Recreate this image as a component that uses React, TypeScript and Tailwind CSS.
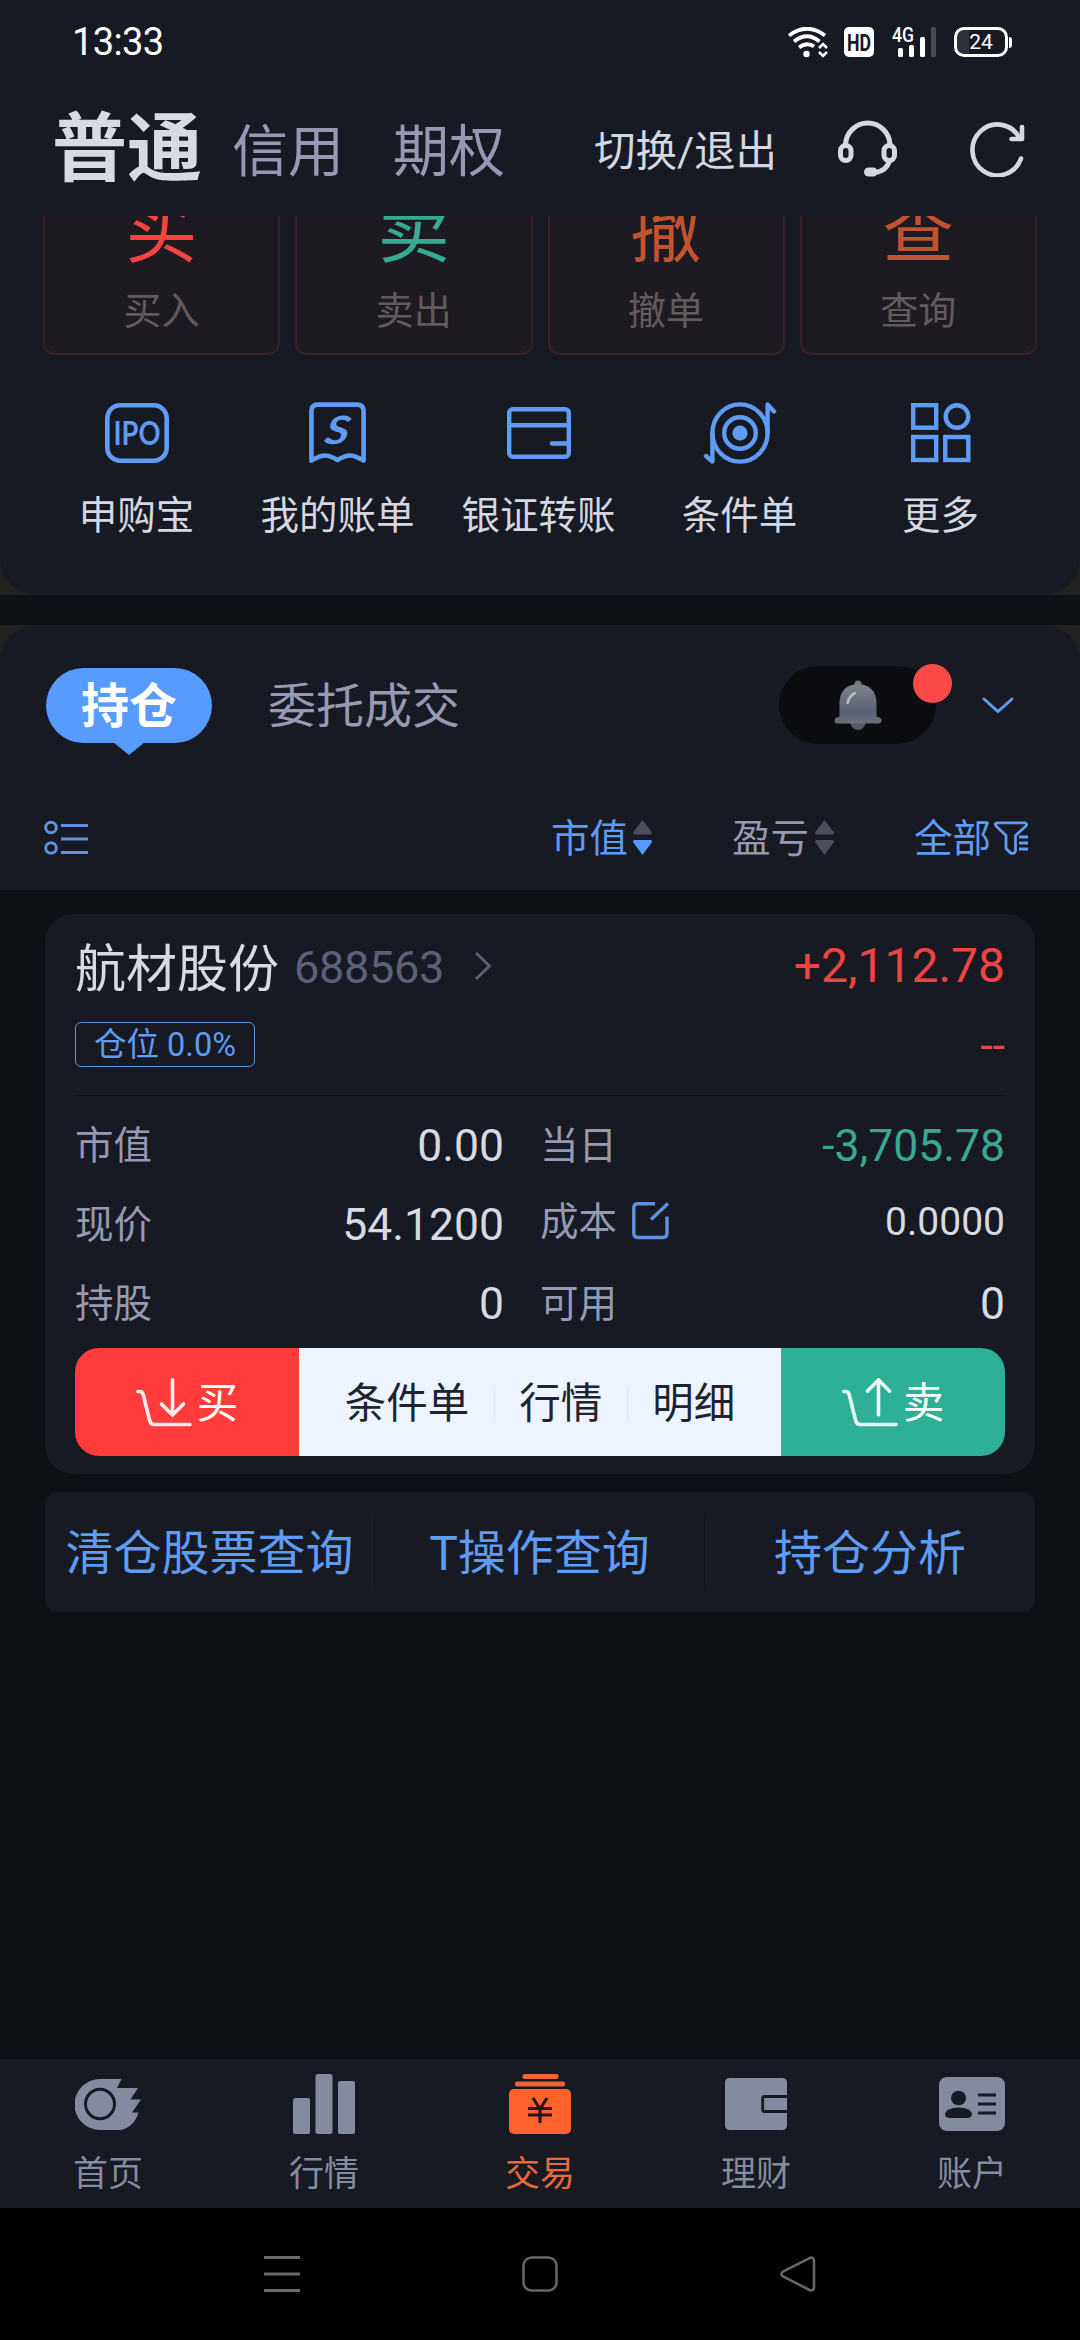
import type { ReactNode } from "react";
import { clsx } from "clsx";

const orders = [
  { glyph: "买", label: "买入", color: "text-[#fb4340]" },
  { glyph: "卖", label: "卖出", color: "text-[#35ab91]" },
  { glyph: "撤", label: "撤单", color: "text-[#bf542f]" },
  { glyph: "查", label: "查询", color: "text-[#bf542f]" },
];

const shortcuts = [
  { label: "申购宝", icon: <IpoIcon /> },
  { label: "我的账单", icon: <BillIcon /> },
  { label: "银证转账", icon: <CardIcon /> },
  { label: "条件单", icon: <TargetIcon /> },
  { label: "更多", icon: <MoreIcon /> },
];

const tabs = [
  { label: "首页", icon: <HomeIcon /> },
  { label: "行情", icon: <BarsIcon /> },
  { label: "交易", icon: <TradeIcon />, active: true },
  { label: "理财", icon: <WalletIcon /> },
  { label: "账户", icon: <AccountIcon /> },
];

function IpoIcon() {
  return (
    <svg width="64" height="60" viewBox="0 0 64 60" fill="none">
      <rect x="2.3" y="2.3" width="59.4" height="55.4" rx="13" stroke="#5f9cf3" strokeWidth="4.6" />
      <text
        x="32"
        y="42"
        textAnchor="middle"
        textLength="47"
        lengthAdjust="spacingAndGlyphs"
        fontFamily="Lato"
        fontWeight="700"
        fontSize="33"
        fill="#5f9cf3"
      >
        IPO
      </text>
    </svg>
  );
}

function BillIcon() {
  return (
    <svg width="57" height="62" viewBox="0 0 57 62" fill="none">
      <path
        d="M2.4 58.5V9Q2.4 2.6 9 2.6H48Q54.6 2.6 54.6 9V58.5Q46 53.5 41 53.5Q36 53.5 28.5 58Q21 53.5 16 53.5Q11 53.5 2.4 58.5Z"
        stroke="#5f9cf3"
        strokeWidth="4.6"
        strokeLinejoin="round"
      />
      <text
        x="21"
        y="42"
        textAnchor="middle"
        fontFamily="Lato"
        fontStyle="italic"
        fontWeight="700"
        fontSize="39"
        fill="#5f9cf3"
        transform="scale(1.2 1) skewX(-8) translate(7 0)"
      >
        S
      </text>
    </svg>
  );
}

function CardIcon() {
  return (
    <svg width="64" height="52" viewBox="0 0 64 52" fill="none" stroke="#5f9cf3" strokeWidth="4.4">
      <rect x="2.2" y="2.2" width="59.6" height="47.6" rx="3.5" />
      <path d="M2 18.3H62" />
      <path d="M45 36.5H62" strokeLinecap="round" />
    </svg>
  );
}

function TargetIcon() {
  return (
    <svg width="74" height="62" viewBox="0 0 74 62" fill="none" stroke="#5f9cf3" strokeWidth="4.4">
      <ellipse cx="37" cy="31" rx="27.6" ry="28.6" />
      <circle cx="37" cy="31" r="15.8" />
      <circle cx="37" cy="31" r="7.6" fill="#5f9cf3" stroke="none" />
      <path d="M9.4 31V59.5L3 54M64.6 31V2.5L71 9.5" strokeLinecap="round" strokeLinejoin="round" />
    </svg>
  );
}

function MoreIcon() {
  return (
    <svg width="60" height="60" viewBox="0 0 60 60" fill="none" stroke="#5f9cf3" strokeWidth="4.4">
      <rect x="2.2" y="2.2" width="23" height="22.5" />
      <circle cx="46" cy="13.5" r="11.3" />
      <rect x="2.2" y="34" width="23" height="23" />
      <rect x="34.3" y="34" width="23" height="23" />
    </svg>
  );
}

function HeadsetIcon() {
  return (
    <svg width="60" height="59" viewBox="0 0 60 59" fill="none" stroke="#d5d7e1" strokeWidth="5">
      <path d="M7.5 27V25A22.3 22.5 0 0 1 52 25V27" />
      <rect x="2.5" y="26.5" width="10.5" height="15" rx="5.2" />
      <rect x="46" y="26.5" width="10.5" height="15" rx="5.2" />
      <path d="M51.5 42Q48.5 51.5 38 53.5" />
      <rect x="26" y="48.5" width="13.5" height="9" rx="4.5" fill="#d5d7e1" stroke="none" />
    </svg>
  );
}

function RefreshIcon() {
  return (
    <svg
      width="55"
      height="57"
      viewBox="0 0 55 57"
      fill="none"
      stroke="#d5d7e1"
      strokeWidth="4.6"
      strokeLinecap="round"
      strokeLinejoin="round"
    >
      <path d="M51 38.5A25 25.500 0 1 1 49.500 18" />
      <path d="M52 7V19H41.5" />
    </svg>
  );
}

function BellIcon() {
  return (
    <svg width="48" height="51" viewBox="0 0 48 51">
      <defs>
        <linearGradient id="bell" x1="0" y1="0" x2="0" y2="1">
          <stop offset="0" stopColor="#7e828b" />
          <stop offset="0.7" stopColor="#5c6172" />
          <stop offset="1" stopColor="#6b717b" />
        </linearGradient>
      </defs>
      <circle cx="24" cy="4" r="3.5" fill="#72757a" />
      <path d="M16 42H32Q30 50 24 50Q18 50 16 42Z" fill="#525a5f" />
      <path
        d="M5.5 37V22Q6.5 5 24 4Q41.5 5 42.5 22V37H44Q47.5 37.5 47.5 40.5Q47.5 43.5 44 43.5H4Q.5 43.5 .5 40.5Q.5 37.5 4 37Z"
        fill="url(#bell)"
      />
      <path d="M13.5 23Q15 16 21 13" stroke="#b9bcc4" strokeWidth="2.6" strokeLinecap="round" fill="none" />
    </svg>
  );
}

function FilterIcon() {
  return (
    <svg width="36" height="35" viewBox="0 0 36 35" fill="none" stroke="#5f9cf3" strokeWidth="2.8" strokeLinejoin="round">
      <path d="M3 1.8H31Q34 2.5 31.500 5.5L21.5 14.5V30Q20 34 16 31.5L12 27.5V14.5L2.5 5.5Q0 2.5 3 1.8Z" />
      <path d="M25 16H34M25 22H34M25 28H34" />
    </svg>
  );
}

function ListIcon() {
  return (
    <svg width="45" height="36" viewBox="0 0 45 36" fill="none" stroke="#5f92dc" strokeWidth="3">
      <circle cx="7" cy="7.5" r="5.3" />
      <circle cx="7" cy="28" r="5.3" />
      <path d="M17 5.5H44M17 19H44M17 32.500H44" />
    </svg>
  );
}

function SortIcon({ active = false }: { active?: boolean }) {
  return (
    <svg width="19" height="36" viewBox="0 0 19 36">
      <path d="M9.5 0L19 12.5Q19 14.5 17.5 14.5H1.5Q0 14.5 0 12.5Z" fill="#4d4d5c" />
      <path d="M9.5 35L0 22Q0 20 1.5 20H17.5Q19 20 19 22Z" fill={active ? "#579bff" : "#4d4d5c"} />
    </svg>
  );
}

function CartIcon({ up = false }: { up?: boolean }) {
  return (
    <svg width="56" height="49" viewBox="0 0 56 49" fill="none" stroke="#fff" strokeOpacity="0.9" strokeWidth="3.6" strokeLinecap="round">
      <path d="M1.8 13.5H3.5Q6.5 13.5 7.2 16.5L13.5 42Q14.5 46.5 18.5 46.5H54" />
      {up ? <path d="M36.5 37V2M25.5 13L36.5 2L47.5 13" /> : <path d="M36.5 1.8V37M25.5 26L36.5 37L47.5 26" />}
    </svg>
  );
}

function HomeIcon() {
  return (
    <svg width="66" height="51" viewBox="0 0 66 51">
      <path
        d="M25 0H46.5L42 9H63L55.5 20.5H66L57 33.5H63.5Q59 48 46 51H25A25.5 25.5 0 0 1 25 0Z"
        fill="#858b9e"
      />
      <ellipse cx="25" cy="25" rx="14.5" ry="14.7" fill="none" stroke="#171a22" strokeWidth="3" />
    </svg>
  );
}

function BarsIcon() {
  return (
    <svg width="62" height="60" viewBox="0 0 62 60" fill="#858b9e">
      <rect x="0" y="24" width="17" height="36" rx="2.5" />
      <rect x="22.5" y="0" width="17" height="60" rx="2.5" />
      <rect x="45" y="7" width="17" height="53" rx="2.5" />
    </svg>
  );
}

function TradeIcon() {
  return (
    <svg width="62" height="60" viewBox="0 0 62 60">
      <g fill="#ee6434">
        <rect x="13.5" y="0" width="36" height="5" rx="2" />
        <rect x="6" y="7.5" width="50" height="5" rx="2" />
      </g>
      <rect y="15" width="62" height="45" rx="5" fill="#ff622b" />
      <path d="M24 24L31 35L38 24M31 35V49M19 34.5H43M19 41H43" stroke="#2b1517" strokeWidth="3.2" fill="none" />
    </svg>
  );
}

function WalletIcon() {
  return (
    <svg width="62" height="52" viewBox="0 0 62 52">
      <rect width="62" height="52" rx="4.5" fill="#858b9e" />
      <path d="M62 18.5H39.5Q37.7 18.5 37.7 20.5V31.5Q37.7 33.5 39.5 33.500H62" stroke="#171a22" strokeWidth="2.8" fill="none" />
    </svg>
  );
}

function AccountIcon() {
  return (
    <svg width="66" height="54" viewBox="0 0 66 54">
      <rect width="66" height="54" rx="8" fill="#858b9e" />
      <g fill="#171a22">
        <ellipse cx="19.5" cy="21" rx="7.5" ry="7.3" />
        <path d="M6 36.5Q8 31 19.5 30.5Q31 31 33 36.5Q33 40.5 29 41H10Q6 40.5 6 36.5Z" />
      </g>
      <path d="M39 18H57M39 27H57M39 36H57" stroke="#171a22" strokeWidth="3" />
    </svg>
  );
}

function StatusBar() {
  return (
    <div className="flex h-[84px] items-center pl-[72px] pr-[68px] text-white">
      <span className="text-[38px] tracking-[-0.6px]">13:33</span>
      <div className="ml-auto flex items-center">
        <svg width="41" height="31" viewBox="0 0 41 31" fill="none" stroke="#fff" strokeWidth="3.800">
          <path d="M1 8.5Q19 -5 37 8.5M6 14.5Q19 4 31.5 14.5M11 20.5Q19 14.5 26 19.500" />
          <circle cx="18.5" cy="27" r="3.2" fill="#fff" stroke="none" />
          <path d="M31 21L35 17L39 21M31 25L35 29L39 25" strokeWidth="2.6" />
        </svg>
        <svg width="30" height="30" viewBox="0 0 30 30" className="ml-[15px]">
          <rect width="30" height="30" rx="5" fill="#fff" />
          <text
            x="3"
            y="23.5"
            fontFamily="Roboto"
            fontWeight="700"
            fontSize="23"
            textLength="24"
            lengthAdjust="spacingAndGlyphs"
            fill="#171a22"
          >
            HD
          </text>
        </svg>
        <svg width="45" height="30" viewBox="0 0 45 30" className="ml-[18px] overflow-visible" fill="#fff">
          <text x="0" y="15" fontFamily="Roboto" fontWeight="500" fontSize="20" textLength="22" lengthAdjust="spacingAndGlyphs">
            4G
          </text>
          <rect x="6" y="21" width="5" height="9" rx="1.5" />
          <rect x="17" y="18" width="5" height="12" rx="1.5" />
          <rect x="28" y="10" width="5" height="20" rx="1.5" />
          <rect x="39" y="0" width="5" height="30" rx="1.5" fill="#484a52" />
        </svg>
        <div className="ml-[17px] flex h-[30px] w-[54px] items-center justify-center rounded-[10px] border-[3px] border-white bg-linear-to-r from-[#30323b] from-25% to-transparent to-25% text-[21px] leading-none">
          24
        </div>
        <div className="ml-px h-[11px] w-[3px] rounded-r-sm bg-white" />
      </div>
    </div>
  );
}

function Header() {
  return (
    <header className="flex h-[132px] items-center pl-[52px] pr-[55px] leading-none">
      <span className="pb-px text-[75px] font-bold text-[#d7d9e3]">普通</span>
      <span className="ml-[30px] pt-1 text-[56px] text-[#9799b2]">信用</span>
      <span className="ml-[49px] pt-1 text-[56px] text-[#9799b2]">期权</span>
      <div className="ml-auto flex items-center">
        <span className="pt-1 text-[41.500px] text-[#d5d7e1]">切换/退出</span>
        <span className="mb-1 ml-[61px]">
          <HeadsetIcon />
        </span>
        <span className="mb-1 ml-[72px]">
          <RefreshIcon />
        </span>
      </div>
    </header>
  );
}

function QuickPanel() {
  return (
    <div className="bg-[#222221]">
      <section className="h-[379px] rounded-b-[36px] bg-[#171a22]">
        <div className="flex h-[139px] items-end gap-[15px] overflow-hidden px-[43px]">
          {orders.map((item) => (
            <div
              key={item.label}
              className="flex h-[200px] flex-1 flex-col items-center justify-end rounded-xl border-2 border-[#3c2027] bg-[#1e1a22] pb-[23px] leading-none"
            >
              <span className={clsx("text-[72px]", item.color)}>{item.glyph}</span>
              <span className="mt-[24px] text-[38px] text-[#625a5d]">{item.label}</span>
            </div>
          ))}
        </div>
        <div className="mt-[47px] flex pl-[36px] pr-[39px]">
          {shortcuts.map((item) => (
            <div key={item.label} className="flex flex-1 flex-col items-center">
              <div className="flex h-[62px] items-center">{item.icon}</div>
              <span className="mt-[33px] whitespace-nowrap text-[38.500px] leading-[38px] text-[#d5d7e1]">{item.label}</span>
            </div>
          ))}
        </div>
      </section>
    </div>
  );
}

function PositionTabs() {
  return (
    <div className="mt-[30px] bg-[#222221]">
      <section className="h-[265px] rounded-t-[36px] bg-[#171a22] pt-[41px]">
        <div className="flex h-[78px] items-center pl-[46px] pr-[66px]">
          <div className="relative flex h-[75px] w-[166px] items-center justify-center rounded-full bg-[#579bff] pt-[3px] text-[48px] font-bold leading-none text-white">
            持仓
            <svg width="32" height="13" viewBox="0 0 32 13" className="absolute left-[67px] top-[74px]">
              <path d="M0 0H32L16 13Z" fill="#579bff" />
            </svg>
          </div>
          <span className="ml-[56px] pt-1 text-[48px] leading-none text-[#9799b2]">委托成交</span>
          <div className="relative ml-auto flex h-[78px] w-[157px] items-center justify-center rounded-full bg-[#0b0d11]">
            <BellIcon />
            <span className="absolute -right-[16px] -top-[2px] h-[39px] w-[39px] rounded-full bg-[#fd4a48]" />
          </div>
          <svg width="32" height="17" viewBox="0 0 32 17" className="ml-[46px]" fill="none">
            <path d="M2 2L16 14.5L30 2" stroke="#5f9cf3" strokeWidth="3" strokeLinecap="round" />
          </svg>
        </div>
        <div className="mt-[69px] flex h-[50px] items-center pl-[44px] pr-[50px] text-[38.500px] leading-none text-[#5f9cf3]">
          <ListIcon />
          <div className="ml-auto flex items-center gap-[5px]">
            <span className="pt-0.5">市值</span>
            <SortIcon active />
          </div>
          <div className="ml-[80px] flex items-center gap-[6px] text-[#9799b2]">
            <span className="pt-0.5">盈亏</span>
            <SortIcon />
          </div>
          <div className="ml-[80px] flex items-center gap-[3px]">
            <span className="pt-0.5">全部</span>
            <FilterIcon />
          </div>
        </div>
      </section>
    </div>
  );
}

function Cell({ label, value, down = false }: { label: ReactNode; value: string; down?: boolean }) {
  return (
    <div className="flex h-[79px] items-center justify-between">
      <span className="text-[38.500px] text-[#9799b2]">{label}</span>
      <span className={clsx("text-[44.500px]", down ? "text-[#3aa78f]" : "text-[#d7d9e3]")}>{value}</span>
    </div>
  );
}

function Holding() {
  return (
    <section className="mx-[45px] mt-6 h-[560px] rounded-[28px] bg-[#171a22] px-[30px] leading-none">
      <div className="flex h-[108px] items-center">
        <span className="pt-0.5 text-[51px] text-[#d7d9e3]">航材股份</span>
        <span className="ml-[15px] pb-0.5 text-[45px] tracking-[-0.3px] text-[#5d6079]">688563</span>
        <svg width="18" height="30" viewBox="0 0 18 30" className="mb-1 ml-[30px]" fill="none">
          <path d="M2 2L15.5 15L2 28" stroke="#5d6079" strokeWidth="2.8" />
        </svg>
        <span className="ml-auto pb-1 text-[48px] text-[#ee4444]">+2,112.78</span>
      </div>
      <div className="flex h-[45px] items-center justify-between">
        <span className="flex h-[45px] w-[180px] items-center justify-center rounded-md border border-[#5f92dc] pt-px text-[32.500px] text-[#5f9cf3]">
          仓位 0.0%
        </span>
        <span className="pt-0.5 text-[45px] text-[#e04a4b]">--</span>
      </div>
      <div className="mt-7 h-px bg-[#0d1014]" />
      <div className="mt-[11px] grid grid-cols-[429px_465px] gap-x-[36px]">
        <div>
          <Cell label="市值" value="0.00" />
          <Cell label="现价" value="54.1200" />
          <Cell label="持股" value="0" />
        </div>
        <div>
          <Cell label="当日" value="-3,705.78" down />
          <div className="flex h-[79px] items-center justify-between pb-[7px]">
            <span className="flex items-center text-[38.500px] text-[#9799b2]">
              成本
              <svg width="38" height="38" viewBox="0 0 38 38" className="mb-[3px] ml-[15px]" fill="none" stroke="#5f92dc" strokeWidth="3.4">
                <path d="M23 1.8H6Q1.8 1.8 1.8 6V31Q1.8 35.5 6 35.5H31Q35 35.5 35 31V14.5M19 17.5L36 1.5" />
              </svg>
            </span>
            <span className="text-[39px] text-[#d7d9e3]">0.0000</span>
          </div>
          <Cell label="可用" value="0" />
        </div>
      </div>
      <div className="mt-[4px] flex h-[108px] overflow-hidden rounded-[24px] text-[41.500px]">
        <div className="flex w-[224px] items-center justify-center gap-[5px] bg-[#ff3c3b] text-white">
          <CartIcon />
          <span className="pt-[3px]">买</span>
        </div>
        <div className="flex flex-1 items-center justify-center bg-[#edf4ff] pt-[3px] text-[#20232f]">
          <span>条件单</span>
          <span className="mx-[24.500px] h-9 w-px bg-[#dde3ec]" />
          <span>行情</span>
          <span className="mx-[24.500px] h-9 w-px bg-[#dde3ec]" />
          <span>明细</span>
        </div>
        <div className="flex w-[224px] items-center justify-center gap-[5px] bg-[#2eb096] text-white">
          <CartIcon up />
          <span className="pt-[3px]">卖</span>
        </div>
      </div>
    </section>
  );
}

function BottomNav() {
  return (
    <nav className="mt-auto flex h-[149px] bg-[#171a22]">
      {tabs.map((tab) => (
        <div key={tab.label} className="flex flex-1 flex-col items-center pt-[15px]">
          <div className="flex h-[60px] items-center">{tab.icon}</div>
          <span className={clsx("mt-[23px] text-[35px] leading-[35px]", tab.active ? "text-[#e9683c]" : "text-[#858b9e]")}>
            {tab.label}
          </span>
        </div>
      ))}
    </nav>
  );
}

function SystemNav() {
  return (
    <div className="h-[132px] bg-black pt-[47px]">
      <svg width="1080" height="38" viewBox="0 0 1080 38" fill="none" stroke="#666" strokeWidth="2.6">
        <path d="M264 2.5H300M264 19H300M264 35.5H300" stroke="#6a6a6a" strokeWidth="3" />
        <rect x="523.5" y="2.5" width="33" height="33" rx="8" />
        <path d="M810 2.8L783 16.5Q780 19 783 21.5L810 35.2Q814 36 814 32V6Q814 2 810 2.8Z" />
      </svg>
    </div>
  );
}

export default function App() {
  return (
    <div className="flex h-[2340px] w-[1080px] flex-col bg-[#0d1014] font-['Roboto','Noto_Sans_CJK_SC',sans-serif]">
      <div className="bg-[#171a22]">
        <StatusBar />
        <Header />
      </div>
      <QuickPanel />
      <PositionTabs />
      <Holding />
      <section className="mx-[45px] mt-[18px] grid h-[120px] grid-cols-[329px_331px_330px] items-center rounded-xl bg-[#171a22] text-center text-[48px] leading-[72px] text-[#5f9cf3]">
        <span className="pt-1">清仓股票查询</span>
        <span className="border-x border-[#0f1217] pt-1">T操作查询</span>
        <span className="pt-1">持仓分析</span>
      </section>
      <BottomNav />
      <SystemNav />
    </div>
  );
}
